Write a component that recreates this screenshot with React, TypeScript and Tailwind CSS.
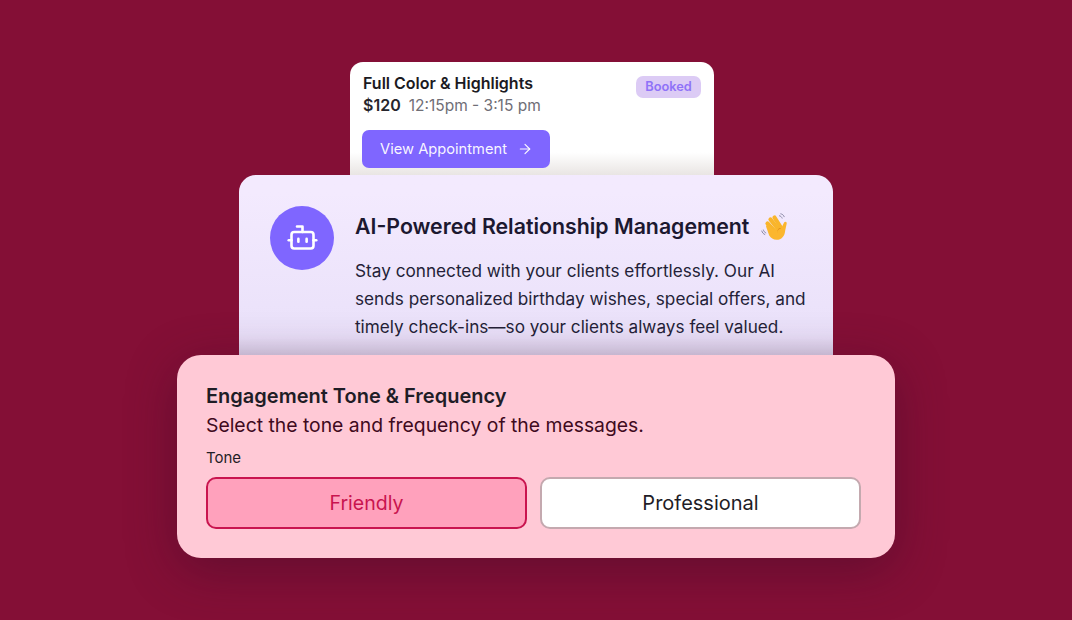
import React from 'react';
import { ArrowRight, Bot } from 'lucide-react';

const WaveEmoji = () => (
  <svg width="30" height="30" viewBox="0 0 30 30" fill="none">
    <g stroke="#f9b52b" strokeWidth="4.2" strokeLinecap="round">
      <path d="M7.500 11.500l8 8.500" />
      <path d="M10.500 7.500l7.500 9.500" />
      <path d="M14.500 5.500l6 9.500" />
    </g>
    <path
      d="M6.400 15.400c-1.100-1.400.8-3.200 2.200-1.900l5 4.500 1.200-.6 6.400-1.200 2.900-5.700c.8-1.500 3-.7 2.600 1l-1.500 7c-.4 5.800-3.800 9.300-8.500 9.300-3.600 0-5.700-1.800-7.500-4.300z"
      fill="#fbb62e"
    />
    <path d="M21.200 16.200c-3 .6-4.200 3-3.800 5.200-.4-2.800.8-5.800 3.800-5.200z" fill="#e08a18" />
    <g stroke="#8d8ba8" strokeWidth="1" strokeLinecap="round">
      <path d="M19.500 3.800c1.200.2 2.200 1.100 2.600 2.300" />
      <path d="M20.800 1.800c1.600.3 2.900 1.400 3.400 2.900" />
      <path d="M3.400 18c.3 1.300 1.200 2.400 2.400 2.900" />
      <path d="M1.800 19c.4 1.600 1.500 2.900 3 3.500" />
    </g>
  </svg>
);

const App: React.FC = () => {
  return (
    <div className="w-[1072px] h-[620px] overflow-hidden bg-[#840f36] flex flex-col items-center pt-[62px] font-['Inter','Liberation_Sans',sans-serif]">
      {/* Appointment card */}
      <div className="w-[364px] h-[113px] shrink-0 mr-[8px] rounded-t-[13px] px-[13px] pt-[11px] bg-gradient-to-b from-white from-80% to-[#e9e5e3]">
        <div className="flex justify-between">
          <div>
            <div className="text-[16px] leading-[20px] font-semibold text-[#1b1a22]">Full Color &amp; Highlights</div>
            <div className="flex items-baseline gap-[8px] mt-[2px]">
              <span className="text-[16px] leading-[20px] font-semibold text-[#26252c]">$120</span>
              <span className="text-[15.500px] leading-[20px] text-[#6f6e76]">12:15pm - 3:15 pm</span>
            </div>
          </div>
          <div className="w-[65px] h-[22px] mt-[3px] rounded-[7px] bg-[#dccbf5] text-[#8f72f8] text-[12.800px] font-semibold flex items-center justify-center">
            Booked
          </div>
        </div>
        <button className="mt-[14px] -ml-[1px] w-[188px] h-[38px] rounded-[7px] bg-[#7f66ff] text-white/95 text-[14.700px] flex items-center pl-[18px] gap-[10px]">
          View Appointment
          <ArrowRight size={16} strokeWidth={1.75} />
        </button>
      </div>

      {/* Relationship card */}
      <div className="w-[594px] h-[180px] shrink-0 rounded-t-[17px] bg-gradient-to-b from-[#f3eafe] from-10% via-[#eae1fa] via-90% to-[#dcd3ec] pl-[31px] pt-[31px] flex gap-[21px]">
        <div className="w-[64px] h-[64px] rounded-full bg-[#7f66ff] text-white flex items-center justify-center shrink-0">
          <Bot size={33} strokeWidth={1.9} className="-mt-[2px]" />
        </div>
        <div>
          <div className="flex items-center gap-[11px] h-[42px] mb-[9px] text-[21.300px] font-semibold text-[#1c1830]">
            AI-Powered Relationship Management
            <WaveEmoji />
          </div>
          <p className="w-[460px] text-[17.200px] leading-[28px] text-[#241f38]">
            Stay connected with your clients effortlessly. Our AI sends personalized birthday wishes, special offers, and timely check-ins—so your clients always feel valued.
          </p>
        </div>
      </div>

      {/* Tone card */}
      <div className="w-[718px] h-[203px] shrink-0 rounded-[24px] bg-[#ffc9d6] px-[29px] pt-[29px] shadow-[0_12px_50px_rgba(60,10,40,0.45)]">
        <div className="text-[20px] leading-[24px] font-semibold text-[#1f1d26]">Engagement Tone &amp; Frequency</div>
        <div className="text-[19.350px] leading-[24px] mt-[5px] text-[#3f0a20]">Select the tone and frequency of the messages.</div>
        <div className="text-[15px] leading-[18px] mt-[12px] text-[#1f1d26]">Tone</div>
        <div className="grid grid-cols-2 gap-[13px] mt-[10px] w-[655px]">
          <button className="h-[52px] rounded-[10px] border-2 border-[#c9144f] bg-[#ffa1bc] text-[#c9144f] text-[19.500px] pt-[1px]">Friendly</button>
          <button className="h-[52px] rounded-[10px] border-2 border-[#c4a9af] bg-white text-[#1f1d26] text-[20px]">Professional</button>
        </div>
      </div>
    </div>
  );
};

export default App;
